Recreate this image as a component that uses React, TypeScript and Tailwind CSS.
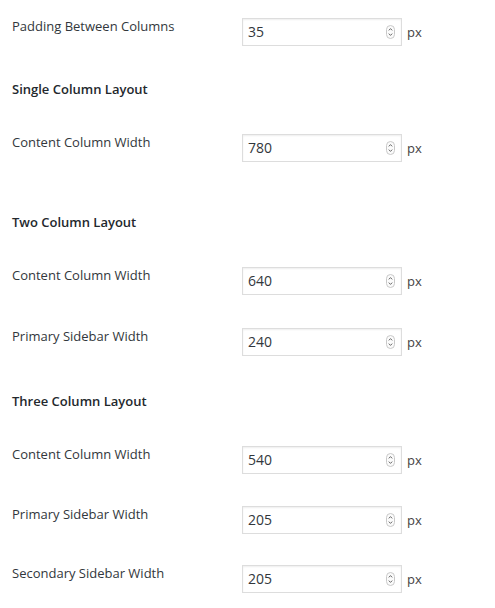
import React from "react";

const font = { fontFamily: '"Open Sans", "Noto Sans", Arial, sans-serif' };

function Spinner() {
  return (
    <svg width="9" height="14" viewBox="0 0 9 14" className="shrink-0">
      <rect x="0.5" y="0.5" width="8" height="13" rx="4" fill="#fbfbfb" stroke="#c8c8c8" />
      <path d="M2.8 5.4 L4.5 3.6 L6.2 5.4" fill="none" stroke="#666" strokeWidth="1" />
      <path d="M2.8 8.6 L4.5 10.4 L6.2 8.6" fill="none" stroke="#666" strokeWidth="1" />
    </svg>
  );
}

function Field({ label, value, mt }: { label: string; value: string; mt: string }) {
  return (
    <div className={`flex items-start ${mt}`}>
      <div className="w-[242px] pl-[12px] text-[13px] leading-[20px] text-[#32373c]">{label}</div>
      <div className="mt-[2px] flex h-[28px] w-[160px] items-center border border-[#dddddd] bg-white pl-[5px] pr-[6px] shadow-[inset_0_1px_2px_rgba(0,0,0,0.07)]">
        <span className="flex-1 text-[14px] leading-[20px] text-[#32373c]">{value}</span>
        <Spinner />
      </div>
      <span className="mt-[6px] pl-[5px] text-[13px] leading-[20px] text-[#444]">px</span>
    </div>
  );
}

function Heading({ children, mt }: { children: React.ReactNode; mt: string }) {
  return (
    <div className={`pl-[12px] text-[13px] font-semibold leading-[20px] text-[#23282d] ${mt}`}>
      {children}
    </div>
  );
}

export default function App() {
  return (
    <div className="flex h-[608px] w-[495px] flex-col bg-white" style={font}>
      <Field label="Padding Between Columns" value="35" mt="mt-[16px]" />
      <Heading mt="mt-[33px]">Single Column Layout</Heading>
      <Field label="Content Column Width" value="780" mt="mt-[33px]" />
      <Heading mt="mt-[50px]">Two Column Layout</Heading>
      <Field label="Content Column Width" value="640" mt="mt-[33px]" />
      <Field label="Primary Sidebar Width" value="240" mt="mt-[31px]" />
      <Heading mt="mt-[35px]">Three Column Layout</Heading>
      <Field label="Content Column Width" value="540" mt="mt-[33px]" />
      <Field label="Primary Sidebar Width" value="205" mt="mt-[30px]" />
      <Field label="Secondary Sidebar Width" value="205" mt="mt-[29px]" />
    </div>
  );
}
